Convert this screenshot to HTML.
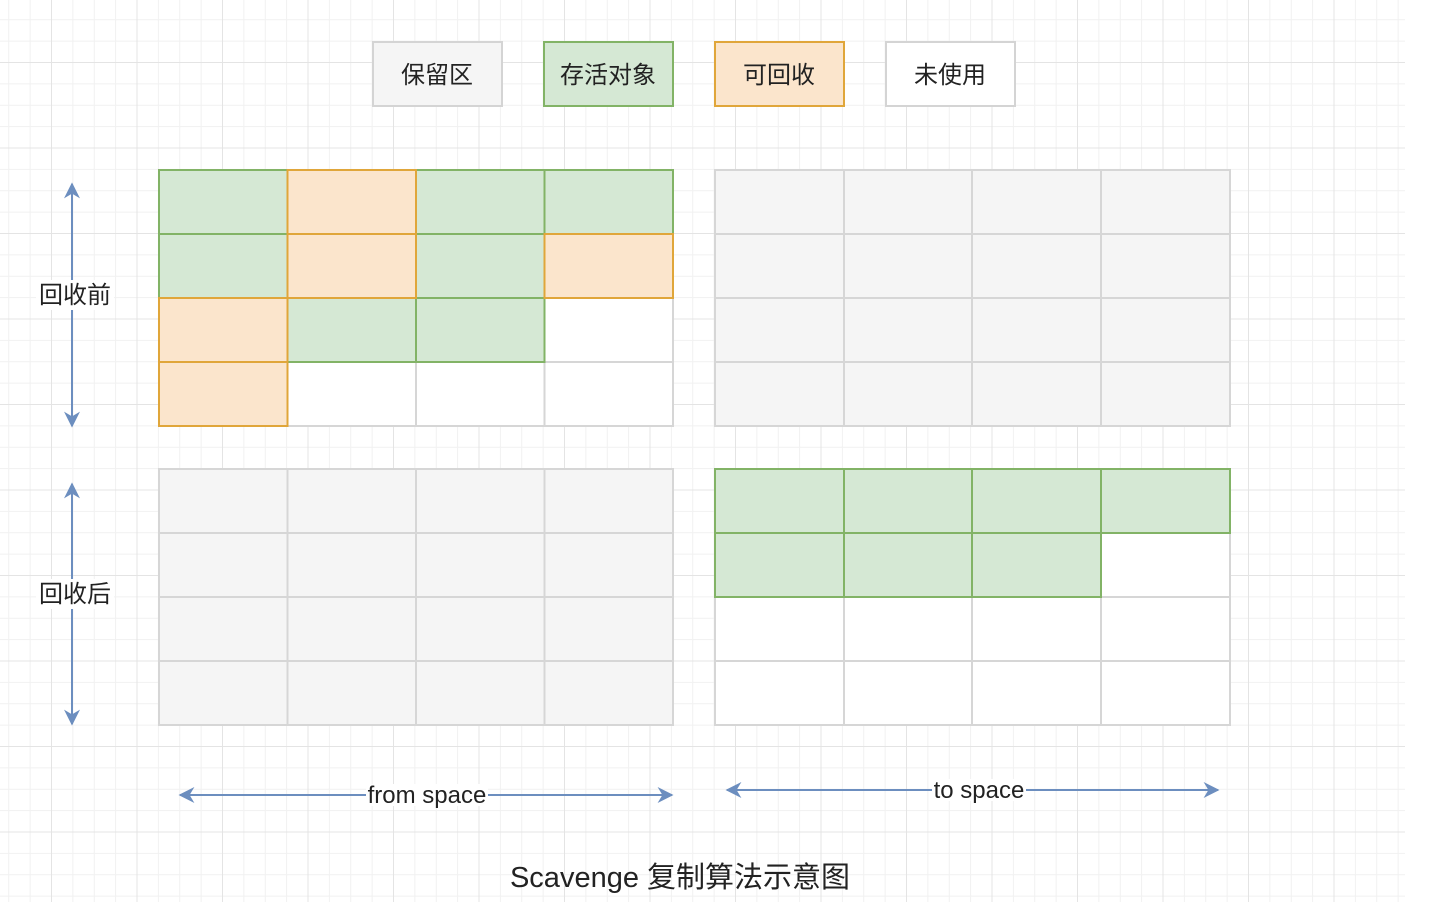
<!DOCTYPE html>
<html><head><meta charset="utf-8"><style>
html,body{margin:0;padding:0;background:#fff;}
body{width:1448px;height:902px;position:relative;overflow:hidden;}
.grid{position:absolute;left:0;top:0;width:1405px;height:902px;
background-image:
linear-gradient(to right,#e4e4e4 1px,transparent 1px),
linear-gradient(to bottom,#e4e4e4 1px,transparent 1px),
linear-gradient(to right,#f1f1f1 1px,transparent 1px),
linear-gradient(to bottom,#f1f1f1 1px,transparent 1px);
background-size:85.5px 85.5px,85.5px 85.5px,21.375px 21.375px,21.375px 21.375px;
background-position:51px 0,0 62px,8.25px 0,0 19.25px;}
svg{position:absolute;left:0;top:0;}
text{font-family:"Liberation Sans","Noto Sans CJK SC",sans-serif;fill:#222;}
</style></head><body>
<div class="grid"></div>
<svg width="1448" height="902" viewBox="0 0 1448 902">
<defs>
<marker id="ah" viewBox="0 0 10 10" refX="9" refY="5" markerUnits="userSpaceOnUse" markerWidth="16" markerHeight="18" orient="auto-start-reverse"><path d="M0,0 L10,5 L0,10 L3,5 z" fill="#6c8ebf"/></marker>
</defs>
<g stroke-width="2">
<rect x="373" y="42" width="129" height="64" fill="#f5f5f5" stroke="#d4d4d4"/>
<rect x="544" y="42" width="129" height="64" fill="#d5e8d4" stroke="#82b366"/>
<rect x="715" y="42" width="129" height="64" fill="#fbe5cc" stroke="#e0a63a"/>
<rect x="886" y="42" width="129" height="64" fill="#fff" stroke="#d4d4d4"/>
</g>
<g font-size="24" text-anchor="middle">
<text x="437" y="83">保留区</text><text x="608" y="83">存活对象</text><text x="779" y="83">可回收</text><text x="950" y="83">未使用</text>
</g>
<g stroke="#d6d6d6" stroke-width="2">
<rect x="159" y="170" width="514" height="256" fill="#fff"/>
<rect x="715" y="170" width="515" height="256" fill="#f5f5f5"/>
<rect x="159" y="469" width="514" height="256" fill="#f5f5f5"/>
<rect x="715" y="469" width="515" height="256" fill="#fff"/>
<path d="M287.5 170V426M416 170V426M544.5 170V426M159 234H673M159 298H673M159 362H673
M844 170V426M972 170V426M1101 170V426M715 234H1230M715 298H1230M715 362H1230
M287.5 469V725M416 469V725M544.5 469V725M159 533H673M159 597H673M159 661H673
M844 469V725M972 469V725M1101 469V725M715 533H1230M715 597H1230M715 661H1230" fill="none"/>
</g>
<g stroke-width="2">
<g fill="#d5e8d4" stroke="#82b366">
<rect x="159" y="170" width="128.5" height="64"/>
<rect x="416" y="170" width="128.5" height="64"/>
<rect x="544.5" y="170" width="128.5" height="64"/>
<rect x="159" y="234" width="128.5" height="64"/>
<rect x="416" y="234" width="128.5" height="64"/>
<rect x="287.5" y="298" width="128.5" height="64"/>
<rect x="416" y="298" width="128.5" height="64"/>
</g>
<g fill="#fbe5cc" stroke="#e0a63a">
<rect x="287.5" y="170" width="128.5" height="64"/>
<rect x="287.5" y="234" width="128.5" height="64"/>
<rect x="544.5" y="234" width="128.5" height="64"/>
<rect x="159" y="298" width="128.5" height="64"/>
<rect x="159" y="362" width="128.5" height="64"/>
</g>
<g fill="#d5e8d4" stroke="#82b366">
<rect x="715" y="469" width="129" height="64"/>
<rect x="844" y="469" width="128" height="64"/>
<rect x="972" y="469" width="129" height="64"/>
<rect x="1101" y="469" width="129" height="64"/>
<rect x="715" y="533" width="129" height="64"/>
<rect x="844" y="533" width="128" height="64"/>
<rect x="972" y="533" width="129" height="64"/>
</g>
</g>
<g stroke="#6c8ebf" stroke-width="2" fill="none">
<line x1="72" y1="184" x2="72" y2="426" marker-start="url(#ah)" marker-end="url(#ah)"/>
<line x1="72" y1="484" x2="72" y2="724" marker-start="url(#ah)" marker-end="url(#ah)"/>
<line x1="180" y1="795" x2="672" y2="795" marker-start="url(#ah)" marker-end="url(#ah)"/>
<line x1="727" y1="790" x2="1218" y2="790" marker-start="url(#ah)" marker-end="url(#ah)"/>
</g>
<rect x="36" y="280" width="78" height="30" fill="#fff"/>
<rect x="36" y="579" width="78" height="30" fill="#fff"/>
<rect x="366" y="784" width="122" height="22" fill="#fff"/>
<rect x="932" y="779" width="94" height="22" fill="#fff"/>
<g font-size="24" text-anchor="middle">
<text x="75" y="303">回收前</text>
<text x="75" y="602">回收后</text>
<text x="427" y="803">from space</text>
<text x="979" y="798">to space</text>
<text x="680" y="887" font-size="29">Scavenge 复制算法示意图</text>
</g>
</svg>
</body></html>
